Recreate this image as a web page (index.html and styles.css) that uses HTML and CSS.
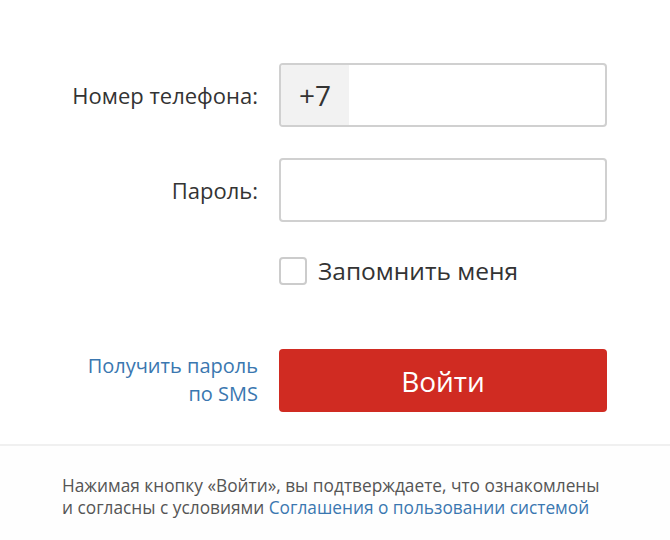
FILE: index.html
```html
<!DOCTYPE html>
<html lang="ru">
<head>
<meta charset="utf-8">
<title>Вход</title>
<link rel="stylesheet" href="styles.css">
</head>
<body>
<main class="page">
  <form class="login">
    <div class="row row-phone">
      <label class="label" for="phone">Номер телефона:</label>
      <div class="field field-phone">
        <span class="prefix">+7</span>
        <input class="input" id="phone" type="tel">
      </div>
    </div>
    <div class="row row-pass">
      <label class="label" for="pass">Пароль:</label>
      <div class="field">
        <input class="input" id="pass" type="password">
      </div>
    </div>
    <div class="row row-remember">
      <span class="label"></span>
      <label class="remember">
        <span class="checkbox"></span>
        <span class="remember-text">Запомнить меня</span>
      </label>
    </div>
    <div class="row row-submit">
      <a class="sms-link label" href="#">Получить пароль<br>по SMS</a>
      <button class="submit" type="button">Войти</button>
    </div>
  </form>
  <footer class="footer">
    <p class="terms">Нажимая кнопку «Войти», вы подтверждаете, что ознакомлены<br>и согласны с условиями <a class="terms-link" href="#">Соглашения о пользовании системой</a></p>
  </footer>
</main>
</body>
</html>
```
FILE: styles.css
```css
html, body {
  margin: 0;
  padding: 0;
  background: #ffffff;
}
body {
  font-family: "Open Sans", "Noto Sans", sans-serif;
  color: #333333;
}
.page {
  width: 670px;
  height: 540px;
  display: flex;
  flex-direction: column;
}
.login {
  display: flex;
  flex-direction: column;
  padding-top: 63px;
}
.row {
  display: grid;
  grid-template-columns: 258px 328px;
  column-gap: 21px;
  align-items: center;
}
.row-pass { margin-top: 31px; }
.row-remember { margin-top: 35px; }
.row-submit { margin-top: 64px; }
.label {
  text-align: right;
  font-size: 22px;
  color: #333333;
  line-height: 28px;
}
.field {
  display: flex;
  height: 64px;
  box-sizing: border-box;
  border: 2px solid #d0d0d0;
  border-radius: 4px;
  background: #ffffff;
  overflow: hidden;
}
.prefix {
  width: 68px;
  flex: none;
  background: #f2f2f2;
  display: flex;
  align-items: center;
  padding-left: 18px;
  box-sizing: border-box;
  font-size: 28px;
  color: #333333;
}
.input {
  flex: 1;
  border: 0;
  outline: none;
  background: transparent;
  font: inherit;
  min-width: 0;
}
.remember {
  display: flex;
  align-items: center;
  gap: 11px;
  height: 28px;
}
.checkbox {
  width: 28px;
  height: 28px;
  box-sizing: border-box;
  border: 2px solid #cccccc;
  border-radius: 4px;
  background: #ffffff;
}
.remember-text {
  font-size: 24.5px;
  line-height: 28px;
  color: #333333;
}
.sms-link {
  color: #3a77b0;
  text-decoration: none;
  font-size: 20px;
  line-height: 28px;
  margin-top: -2px;
}
.submit {
  height: 63px;
  border: 0;
  border-radius: 4px;
  background: #d02b22;
  color: #ffffff;
  font-family: "Open Sans", "Noto Sans", sans-serif;
  font-size: 28px;
  padding: 0;
}
.footer {
  margin-top: 32px;
  border-top: 2px solid #f0f0f0;
  background: #fefefe;
  flex: 1;
}
.terms {
  margin: 29px 0 0 62px;
  font-size: 17.3px;
  line-height: 22px;
  color: #555555;
}
.terms-link {
  color: #3a77b0;
  text-decoration: none;
}
```
